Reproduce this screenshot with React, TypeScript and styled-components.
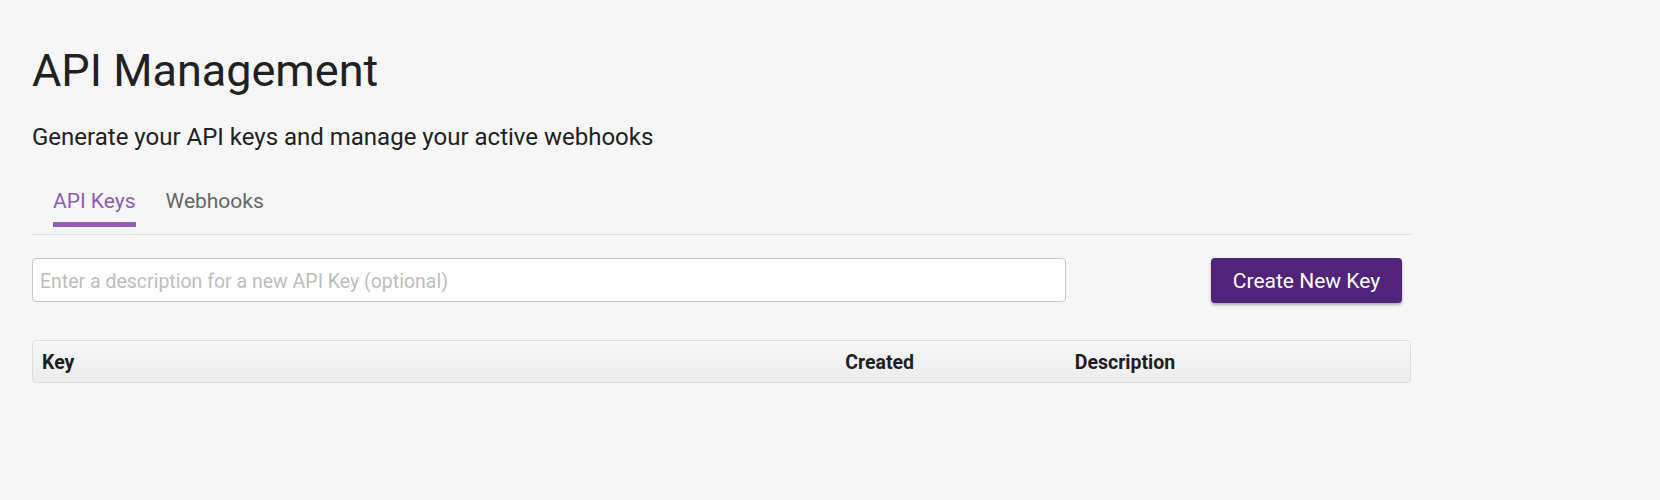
import React from "react";
import styled, { createGlobalStyle } from "styled-components";

const GlobalStyle = createGlobalStyle`
  html, body {
    margin: 0;
    padding: 0;
    background: #f6f6f6;
    font-family: Roboto, "Noto Sans", Arial, sans-serif;
  }
  * { box-sizing: border-box; }
`;

const Page = styled.div`
  min-height: 500px;
  background: #f6f6f6;
  padding: 47px 0 0 32px;
`;

const Container = styled.div`
  width: calc(85vw - 32px);
`;

const Title = styled.h1`
  margin: 0;
  font-size: 45px;
  line-height: 48px;
  font-weight: 400;
  color: #212121;
`;

const Subtitle = styled.p`
  margin: 26px 0 0;
  font-size: 24px;
  line-height: 32px;
  font-weight: 400;
  color: #212121;
`;

const TabBar = styled.div`
  display: flex;
  gap: 30px;
  margin-top: 36px;
  padding-left: 21px;
  padding-bottom: 7px;
  border-bottom: 1px solid #e0e0e0;
`;

const Tab = styled.div<{ $active?: boolean }>`
  font-size: 21px;
  line-height: 24px;
  padding-bottom: 9px;
  color: ${(p) => (p.$active ? "#8e5db6" : "#666666")};
  border-bottom: 5px solid ${(p) => (p.$active ? "#9060b5" : "transparent")};
  cursor: pointer;
`;

const Grid = styled.div`
  display: grid;
  grid-template-columns: 7fr 2fr 3fr;
`;

const FormRow = styled(Grid)`
  margin-top: 23px;
`;

const Input = styled.input`
  grid-column: 1 / 3;
  height: 44px;
  border: 1px solid #c6c6c6;
  border-radius: 4px;
  background: #ffffff;
  padding: 2px 7px 0;
  font-family: Roboto, "Noto Sans", Arial, sans-serif;
  font-size: 19.5px;
  color: #222;
  outline: none;
  &::placeholder {
    color: #bdbdbd;
  }
`;

const ButtonCell = styled.div`
  display: flex;
  justify-content: flex-end;
  padding-right: 9px;
`;

const PrimaryButton = styled.button`
  height: 45px;
  width: 191px;
  border: none;
  border-radius: 4px;
  background: #52237a;
  color: #ffffff;
  font-family: Roboto, "Noto Sans", Arial, sans-serif;
  font-size: 21px;
  font-weight: 400;
  box-shadow: 0 2px 3px rgba(0, 0, 0, 0.3);
  cursor: pointer;
`;

const TableHead = styled(Grid)`
  margin-top: 37px;
  height: 43px;
  align-items: center;
  padding-top: 2px;
  border: 1px solid #dddddd;
  border-radius: 4px;
  background: linear-gradient(#f7f7f7, #ececec);
`;

const HeadCell = styled.div`
  padding-left: 9px;
  font-size: 19.5px;
  font-weight: 700;
  color: #1e1e1e;
`;

export default function App() {
  return (
    <>
      <GlobalStyle />
      <Page>
        <Container>
          <Title>API Management</Title>
          <Subtitle>Generate your API keys and manage your active webhooks</Subtitle>
          <TabBar>
            <Tab $active>API Keys</Tab>
            <Tab>Webhooks</Tab>
          </TabBar>
          <FormRow>
            <Input placeholder="Enter a description for a new API Key (optional)" />
            <ButtonCell>
              <PrimaryButton>Create New Key</PrimaryButton>
            </ButtonCell>
          </FormRow>
          <TableHead>
            <HeadCell>Key</HeadCell>
            <HeadCell>Created</HeadCell>
            <HeadCell>Description</HeadCell>
          </TableHead>
        </Container>
      </Page>
    </>
  );
}
